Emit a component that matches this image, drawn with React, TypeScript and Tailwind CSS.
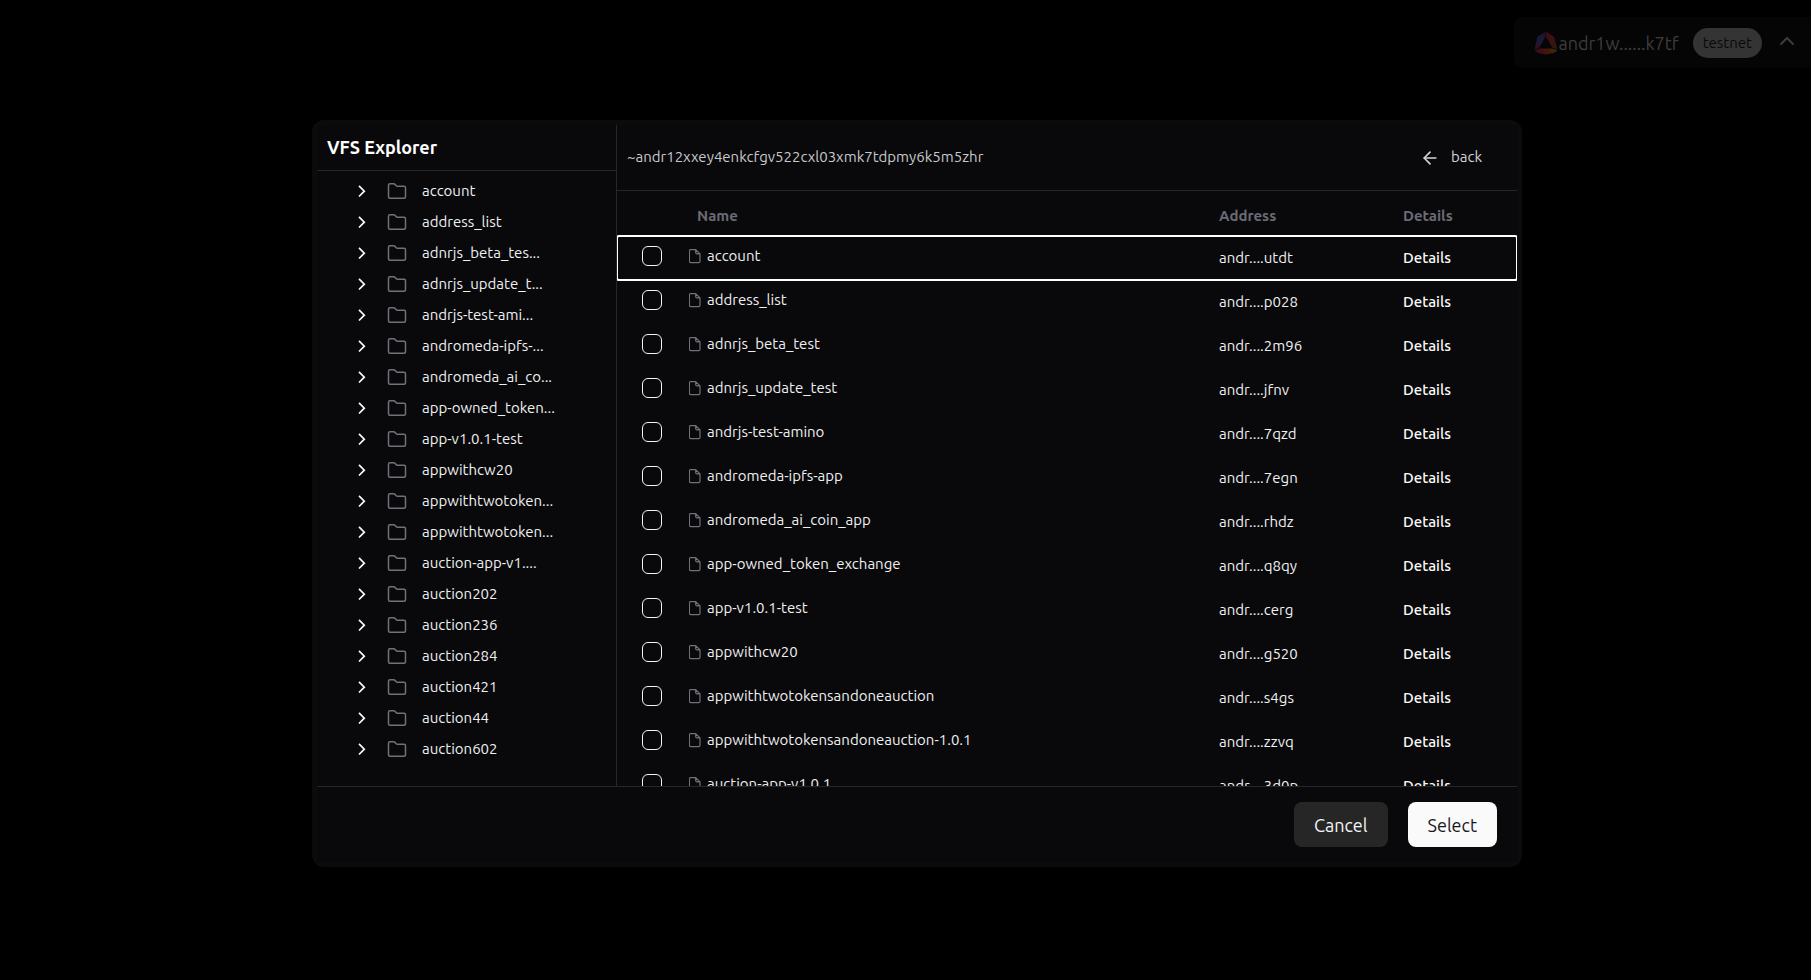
import { ArrowLeft, ChevronUp } from "lucide-react";

const folders = [
  "account",
  "address_list",
  "adnrjs_beta_tes...",
  "adnrjs_update_t...",
  "andrjs-test-ami...",
  "andromeda-ipfs-...",
  "andromeda_ai_co...",
  "app-owned_token...",
  "app-v1.0.1-test",
  "appwithcw20",
  "appwithtwotoken...",
  "appwithtwotoken...",
  "auction-app-v1....",
  "auction202",
  "auction236",
  "auction284",
  "auction421",
  "auction44",
  "auction602",
];

const entries = [
  { name: "account", address: "andr....utdt" },
  { name: "address_list", address: "andr....p028" },
  { name: "adnrjs_beta_test", address: "andr....2m96" },
  { name: "adnrjs_update_test", address: "andr....jfnv" },
  { name: "andrjs-test-amino", address: "andr....7qzd" },
  { name: "andromeda-ipfs-app", address: "andr....7egn" },
  { name: "andromeda_ai_coin_app", address: "andr....rhdz" },
  { name: "app-owned_token_exchange", address: "andr....q8qy" },
  { name: "app-v1.0.1-test", address: "andr....cerg" },
  { name: "appwithcw20", address: "andr....g520" },
  { name: "appwithtwotokensandoneauction", address: "andr....s4gs" },
  { name: "appwithtwotokensandoneauction-1.0.1", address: "andr....zzvq" },
  { name: "auction-app-v1.0.1", address: "andr....3d0p" },
];

function Logo() {
  return (
    <svg viewBox="0 0 24 24" className="size-6" aria-hidden="true">
      <defs>
        <linearGradient id="left" x1="0" y1="1" x2="0" y2="0">
          <stop offset="0" stopColor="#340c24" />
          <stop offset="0.6" stopColor="#161a3a" />
          <stop offset="1" stopColor="#221230" />
        </linearGradient>
        <linearGradient id="right" x1="0" y1="0" x2="0" y2="1">
          <stop offset="0" stopColor="#420c18" />
          <stop offset="1" stopColor="#33180c" />
        </linearGradient>
        <linearGradient id="base" x1="0" y1="0" x2="1" y2="0">
          <stop offset="0" stopColor="#3a0a1a" />
          <stop offset="0.6" stopColor="#45180a" />
          <stop offset="1" stopColor="#3f3208" />
        </linearGradient>
      </defs>
      <path d="M11.300 0.700 3.400 5.800 0.500 18.800 5.500 16.600 11.300 6z" fill="url(#left)" />
      <path d="M12.100 0.700 20 5.800 23.500 18.800 18.400 16.600 12.100 6z" fill="url(#right)" />
      <path d="M0.700 19.600 5.700 17.400H18.200L23.300 19.600 20 21.800 12 23.400 3.500 21.800z" fill="url(#base)" />
    </svg>
  );
}

function FolderIcon() {
  return (
    <svg viewBox="0 0.75 20 17" className="h-[17px] w-5 shrink-0" fill="none" stroke="#71717a" strokeWidth="1.500" strokeLinejoin="round" aria-hidden="true">
      <path d="M1.500 14.500V3Q1.500 1.500 3 1.500H6.700Q7.300 1.500 7.700 1.900L9.300 3.500Q9.700 3.900 10.300 3.900H17Q18.500 3.900 18.500 5.400V14.500Q18.500 16 17 16H3Q1.500 16 1.500 14.500Z" />
    </svg>
  );
}

function FileIcon() {
  return (
    <svg viewBox="0.6 0.4 12 15" className="h-[15px] w-3 shrink-0" fill="none" stroke="#71717a" strokeWidth="1.200" strokeLinejoin="round" aria-hidden="true">
      <path d="M7.300 1H2.300Q1 1 1 2.300V12.700Q1 14 2.300 14H10.300Q11.600 14 11.600 12.700V5.300ZM7.300 1V4Q7.300 5.300 8.600 5.300H11.600" />
    </svg>
  );
}

export default function App() {
  return (
    <div className="flex min-h-screen flex-col overflow-hidden bg-black font-['Ubuntu','Noto_Sans',sans-serif] text-[#f0f0f1]">
      <header className="flex justify-end pt-[17px]">
        <button type="button" className="-mr-4 flex h-[51px] items-center rounded-lg bg-[#050505] pr-7 pl-5 text-[#3d3d3d]">
          <Logo />
          <span className="pt-px text-lg">andr1w......k7tf</span>
          <span className="ml-[14px] flex h-[30px] items-center rounded-full bg-[#343434] px-[10px] pt-px text-[15px] text-[#0a0a0a]">testnet</span>
          <ChevronUp className="-mt-1 ml-[13px] size-6" strokeWidth={2} />
        </button>
      </header>

      <main className="flex justify-center pt-[52px] pl-[23px]">
        <section role="dialog" aria-labelledby="title" className="w-full max-w-[1210px] rounded-xl bg-[#0b0b0b] p-[5px]">
          <div className="bg-[#09090b]">
            <div className="flex h-[calc(100vh-318px)] border-b border-[#27272a]">
              <aside className="flex w-[300px] shrink-0 flex-col border-r border-[#27272a]">
                <h1 id="title" className="flex h-[46px] items-center border-b border-[#27272a] px-[10px] pb-px text-lg font-semibold text-white">
                  VFS Explorer
                </h1>
                <ul className="overflow-hidden pt-[5px]">
                  {folders.map((name, i) => (
                    <li key={i}>
                      <button type="button" className="flex h-[31px] w-full items-center pl-10 text-left text-[15px]">
                        <svg viewBox="0 0 10 13" className="h-[13px] w-[10px]" fill="none" stroke="#fafafa" strokeWidth="1.700" aria-hidden="true">
                          <path d="M2 0.900 7.300 6.200 2 11.500" />
                        </svg>
                        <span className="ml-5 flex"><FolderIcon /></span>
                        <span className="ml-[15px]">{name}</span>
                      </button>
                    </li>
                  ))}
                </ul>
              </aside>

              <div className="flex min-w-0 flex-1 flex-col overflow-hidden">
                <div className="flex h-[66px] shrink-0 items-center justify-between border-b border-[#27272a] pr-[35px] pl-[10px] text-[15px]">
                  <span className="text-[#c8c8cc]">~andr12xxey4enkcfgv522cxl03xmk7tdpmy6k5m5zhr</span>
                  <button type="button" className="flex items-center gap-[11px] text-[#d4d4d8]">
                    <ArrowLeft className="size-5" strokeWidth={2} />
                    back
                  </button>
                </div>
                <div className="overflow-hidden">
                  <table className="w-full table-fixed border-separate border-spacing-0 text-left text-[15px]">
                    <thead>
                      <tr className="h-[45px] text-[#6b6b75]">
                        <th className="w-[70px]" aria-label="Select" />
                        <th className="pt-[5px] pl-[10px] font-semibold">Name</th>
                        <th className="w-[184px] pt-[5px] font-semibold">Address</th>
                        <th className="w-[114px] pt-[5px] font-semibold">Details</th>
                      </tr>
                    </thead>
                    <tbody>
                      {entries.map((entry, i) => (
                        <tr key={entry.name} className={i === 0 ? "h-11 rounded-xs outline-2 -outline-offset-1 outline-white" : "h-11"}>
                          <td className="pb-1 pl-[25px]">
                            <input
                              type="checkbox"
                              aria-label={entry.name}
                              className="block size-5 appearance-none rounded-md border border-[#f4f4f5]"
                            />
                          </td>
                          <td className="pb-1">
                            <span className="flex items-center gap-[6px] pl-[2px]">
                              <FileIcon />
                              {entry.name}
                            </span>
                          </td>
                          <td>{entry.address}</td>
                          <td>
                            <button type="button" className="font-medium text-[#fafafa]">Details</button>
                          </td>
                        </tr>
                      ))}
                    </tbody>
                  </table>
                </div>
              </div>
            </div>
            <footer className="flex justify-end gap-5 px-5 py-[15px]">
              <button type="button" className="h-[45px] rounded-lg bg-[#262626] px-5 text-lg text-[#f4f4f5]">Cancel</button>
              <button type="button" className="h-[45px] rounded-lg bg-[#fafafa] px-5 text-lg text-[#18181b]">Select</button>
            </footer>
          </div>
        </section>
      </main>
    </div>
  );
}
